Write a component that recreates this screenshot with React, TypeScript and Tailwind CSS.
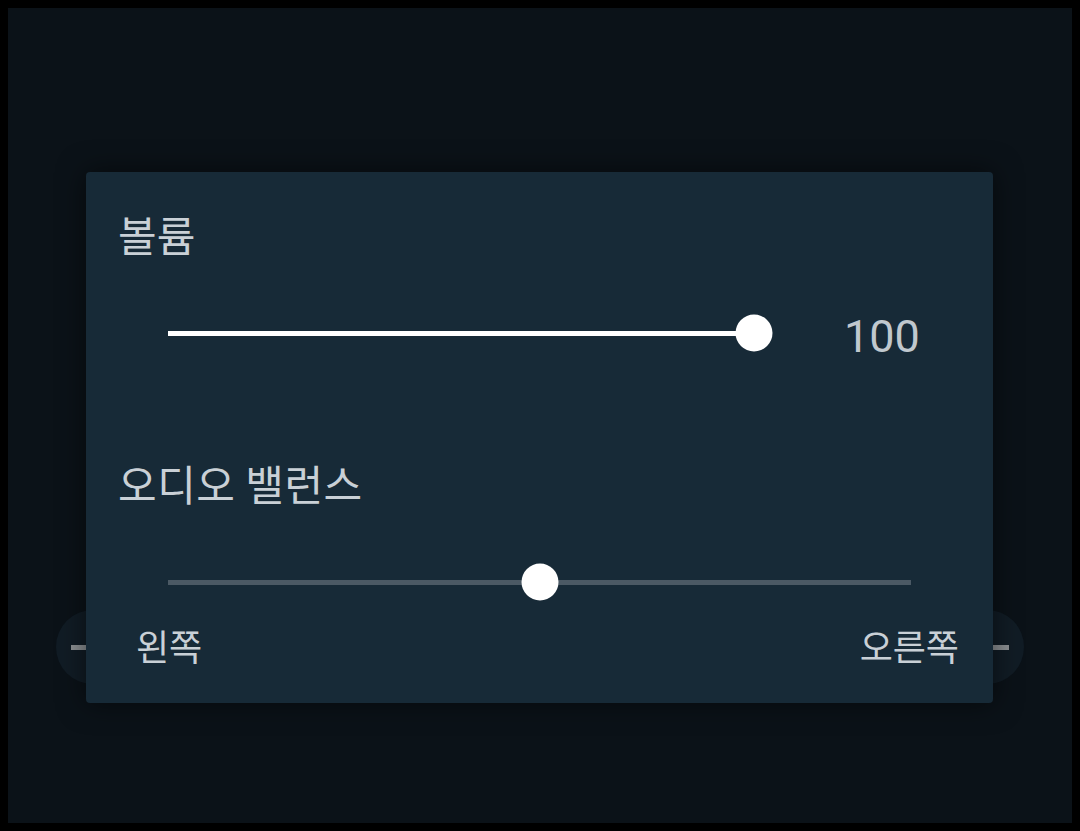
import React from 'react';

const KR = { fontFamily: '"Noto Sans CJK KR", "Noto Sans", sans-serif' };

type SliderProps = {
  value: number;
  width: number;
  fill: string;
  rest: string;
};

const Slider: React.FC<SliderProps> = ({ value, width, fill, rest }) => {
  return (
    <div className="relative flex h-[40px] items-center" style={{ width }}>
      <div className="flex h-[5px] w-full">
        <div className={`h-full ${fill}`} style={{ width: `${value}%` }} />
        <div className={`h-full flex-1 ${rest}`} />
      </div>
      <div
        className="absolute top-1/2 h-[37px] w-[37px] -translate-x-1/2 -translate-y-1/2 rounded-full bg-white"
        style={{ left: `${value}%` }}
      />
    </div>
  );
};

const RoundButton: React.FC<{ plus?: boolean }> = ({ plus }) => (
  <div className="relative flex h-[74px] w-[74px] items-center justify-center rounded-full bg-[#111c25]">
    <div className="h-[5px] w-[44px] bg-[#8b8f92]" />
    {plus && <div className="absolute h-[44px] w-[5px] bg-[#8b8f92]" />}
  </div>
);

const App: React.FC = () => {
  return (
    <div className="h-[831px] w-[1080px] bg-black p-[8px]">
      <div className="relative h-full w-full bg-[#0b1218]">
        <div className="flex justify-between px-[48px] pt-[602px]">
          <RoundButton />
          <RoundButton plus />
        </div>

        <div
          className="absolute left-[78px] top-[164px] flex h-[531px] w-[907px] flex-col rounded-[4px] bg-[#172a37] pt-[41px] shadow-[0_0_28px_rgba(0,0,0,0.55)]"
          style={KR}
        >
          <div className="pl-[32px] text-[42px] leading-none text-[#c9d0d6]">볼륨</div>

          <div className="mt-[58px] flex h-[40px] items-center pl-[82px]">
            <Slider value={100} width={586} fill="bg-white" rest="bg-[#4b5964]" />
            <span
              className="ml-[90px] pt-[6px] text-[45px] leading-none text-[#c0c8ce]"
              style={{ fontFamily: 'Roboto, "Noto Sans", sans-serif' }}
            >
              100
            </span>
          </div>

          <div className="mt-[109px] pl-[32px] text-[42px] leading-none tracking-[0.5px] text-[#c9d0d6]">
            오디오 밸런스
          </div>

          <div className="mt-[58px] pl-[82px]">
            <Slider value={50} width={743} fill="bg-[#4b5964]" rest="bg-[#4b5964]" />
          </div>

          <div className="mt-[25px] flex justify-between pl-[50px] pr-[34px] text-[36px] leading-none text-[#c9d0d6]">
            <span>왼쪽</span>
            <span>오른쪽</span>
          </div>
        </div>
      </div>
    </div>
  );
};

export default App;
